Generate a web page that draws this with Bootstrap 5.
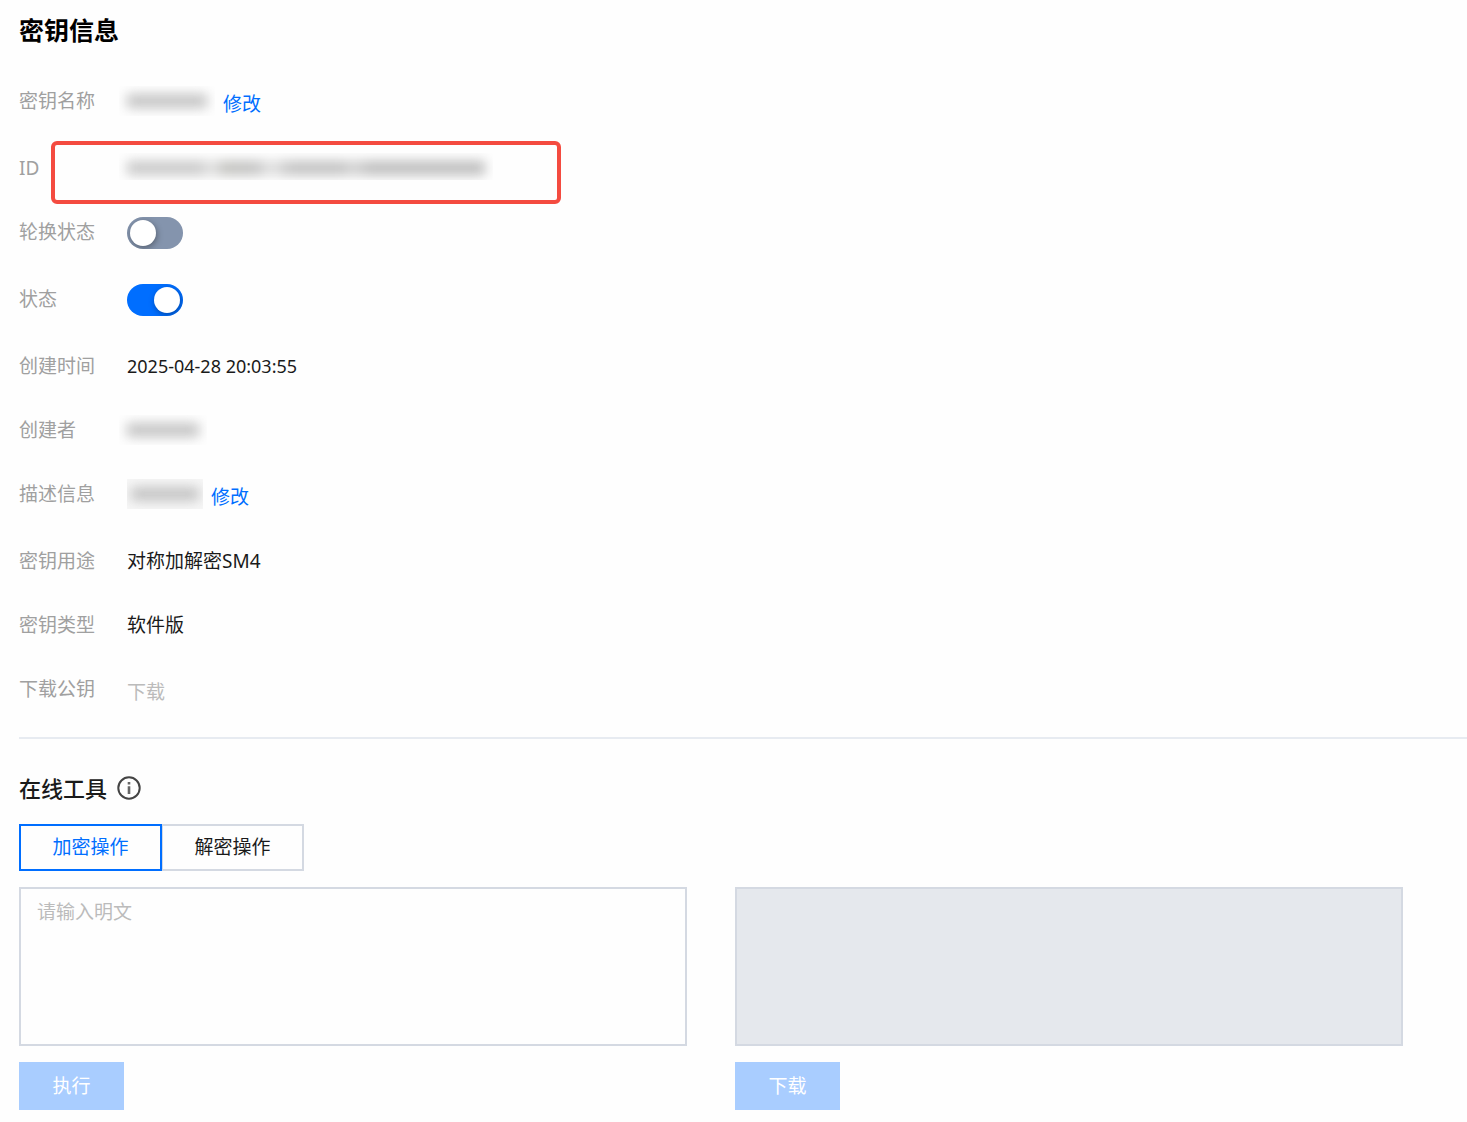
<!DOCTYPE html>
<html lang="zh-CN">
<head>
<meta charset="utf-8">
<meta name="viewport" content="width=device-width, initial-scale=1">
<title>密钥信息</title>
<link href="https://cdn.jsdelivr.net/npm/bootstrap@5.3.0/dist/css/bootstrap.min.css" rel="stylesheet">
<style>
  body { font-family: "Noto Sans", "Noto Sans CJK SC", sans-serif; font-size: 19px; line-height: 30px; color: #1a1a1a; background: #fefefe; }
  a { color: #006eff; }
  .page { padding: 11px 0 12px 19px; }
  .page-title { font-size: 25px; line-height: 38px; color: #000; margin-bottom: 37px; }
  .info-list { row-gap: 34px; padding-bottom: 30px; border-bottom: 2px solid #e7ebf1; }
  .info-label { width: 108px; color: #a0a0a0; }
  .info-tall { min-height: 33px; }
  .info-date { font-size: 18px; }
  .act-link { padding-top: 3px; line-height: 30px; }
  .act-off { color: #bbb; border: 0; background: none; padding: 3px 0 0; line-height: 30px; }
  .redacted { height: 30px; overflow: hidden; padding: 8px 8px; margin-left: -8px; }
  .redacted::before { content: ""; display: block; height: 14px; background: #c4c4c4; filter: blur(6px); }
  .redacted-name { width: 96px; }
  .redacted-id { width: 374px; height: 27px; }
  .redacted-id::before { background: linear-gradient(90deg, #c8c8c8 20%, #e2e2e2 24%, #c0c0bc 27%, #c0c0c0 36%, #e2e2e2 40%, #c0c0c0 46%, #c0c0c0 60%, #d2d2d2 63%, #bcbcbc 68%, #bcbcbc); }
  .redacted-user { width: 88px; }
  .redacted-desc { width: 76px; margin-left: 0; padding: 8px 4px; background: #f7f7f7; }
  .marker { left: 32px; top: -12px; width: 510px; height: 63px; border: 4px solid #f44b40; border-radius: 6px; pointer-events: none; }
  .form-switch .toggle { width: 56px; height: 32px; margin: 0; border: 0; background: #8494ad; overflow: hidden; }
  .form-switch .toggle::before { content: ""; display: block; width: 26px; height: 26px; margin: 3px; border-radius: 50%; background: #fff; box-shadow: 1px 2px 6px rgba(0,0,0,.35); }
  .form-switch .toggle:checked { background: #006eff; }
  .form-switch .toggle:checked::before { margin-left: 27px; }
  .tools { padding-top: 32px; padding-right: 64px; }
  .tools-head { margin-bottom: 19px; }
  .tools-title { font-size: 22px; line-height: 34px; font-weight: 500; }
  .tab-btn { width: 143px; height: 47px; padding: 0; font-size: 19px; border: 2px solid #d4d9e2; border-radius: 0; color: #1a1a1a; background: #fefefe; }
  .tab-btn.active { border-color: #006eff; color: #006eff; background: #fefefe; }
  .pane-row { gap: 48px; }
  .pane-box { height: 159px; padding: 8px 16px; font-size: 19px; line-height: 30px; border: 2px solid #d4d9e2; border-radius: 0; background: #fefefe; resize: none; }
  .pane-box::placeholder { color: #bbb; }
  .pane-box:disabled { background: #e5e8ed; }
  .run-btn { width: 105px; height: 48px; padding: 0; font-size: 19px; border: 0; border-radius: 0; }
  .run-btn:disabled { background: #a9cdff; color: #fff; opacity: 1; }
</style>
</head>
<body>
<main class="page">
  <h1 class="page-title fw-bold">密钥信息</h1>
  <section class="info-list d-flex flex-column">
    <div class="info-tall d-flex"><span class="info-label">密钥名称</span><span class="redacted redacted-name"></span><a class="act-link text-decoration-none ms-2" href="#">修改</a></div>
    <div class="d-flex position-relative"><span class="info-label">ID</span><span class="redacted redacted-id"></span><span class="marker position-absolute"></span></div>
    <div class="info-tall d-flex"><label class="info-label" for="rotate">轮换状态</label><div class="form-switch p-0"><input class="form-check-input toggle d-block" type="checkbox" role="switch" id="rotate"></div></div>
    <div class="info-tall d-flex"><label class="info-label" for="enabled">状态</label><div class="form-switch p-0"><input class="form-check-input toggle d-block" type="checkbox" role="switch" id="enabled" checked></div></div>
    <div class="d-flex"><span class="info-label">创建时间</span><span class="info-date">2025-04-28 20:03:55</span></div>
    <div class="d-flex"><span class="info-label">创建者</span><span class="redacted redacted-user"></span></div>
    <div class="info-tall d-flex"><span class="info-label">描述信息</span><span class="redacted redacted-desc"></span><a class="act-link text-decoration-none ms-2" href="#">修改</a></div>
    <div class="d-flex"><span class="info-label">密钥用途</span><span>对称加解密SM4</span></div>
    <div class="d-flex"><span class="info-label">密钥类型</span><span>软件版</span></div>
    <div class="info-tall d-flex"><span class="info-label">下载公钥</span><button class="act-off" type="button" disabled>下载</button></div>
  </section>
  <section class="tools">
    <div class="tools-head d-flex align-items-center">
      <h2 class="tools-title mb-0">在线工具</h2>
      <svg class="ms-2" width="26" height="26" viewBox="0 0 26 26" fill="none" stroke="#444" aria-hidden="true"><circle cx="14" cy="13" r="10.7" stroke-width="2"/><path d="M14 7v2.6M14 11.3V19" stroke="#666" stroke-width="2.6"/></svg>
    </div>
    <div class="btn-group mb-3" role="group" aria-label="操作">
      <button class="btn tab-btn active" type="button">加密操作</button>
      <button class="btn tab-btn" type="button">解密操作</button>
    </div>
    <div class="pane-row d-flex">
      <div class="flex-fill w-50">
        <textarea class="form-control pane-box mb-3" placeholder="请输入明文" aria-label="明文"></textarea>
        <button class="btn run-btn" type="button" disabled>执行</button>
      </div>
      <div class="flex-fill w-50">
        <textarea class="form-control pane-box mb-3" aria-label="结果" disabled></textarea>
        <button class="btn run-btn" type="button" disabled>下载</button>
      </div>
    </div>
  </section>
</main>
<script src="https://cdn.jsdelivr.net/npm/bootstrap@5.3.0/dist/js/bootstrap.bundle.min.js"></script>
</body>
</html>
